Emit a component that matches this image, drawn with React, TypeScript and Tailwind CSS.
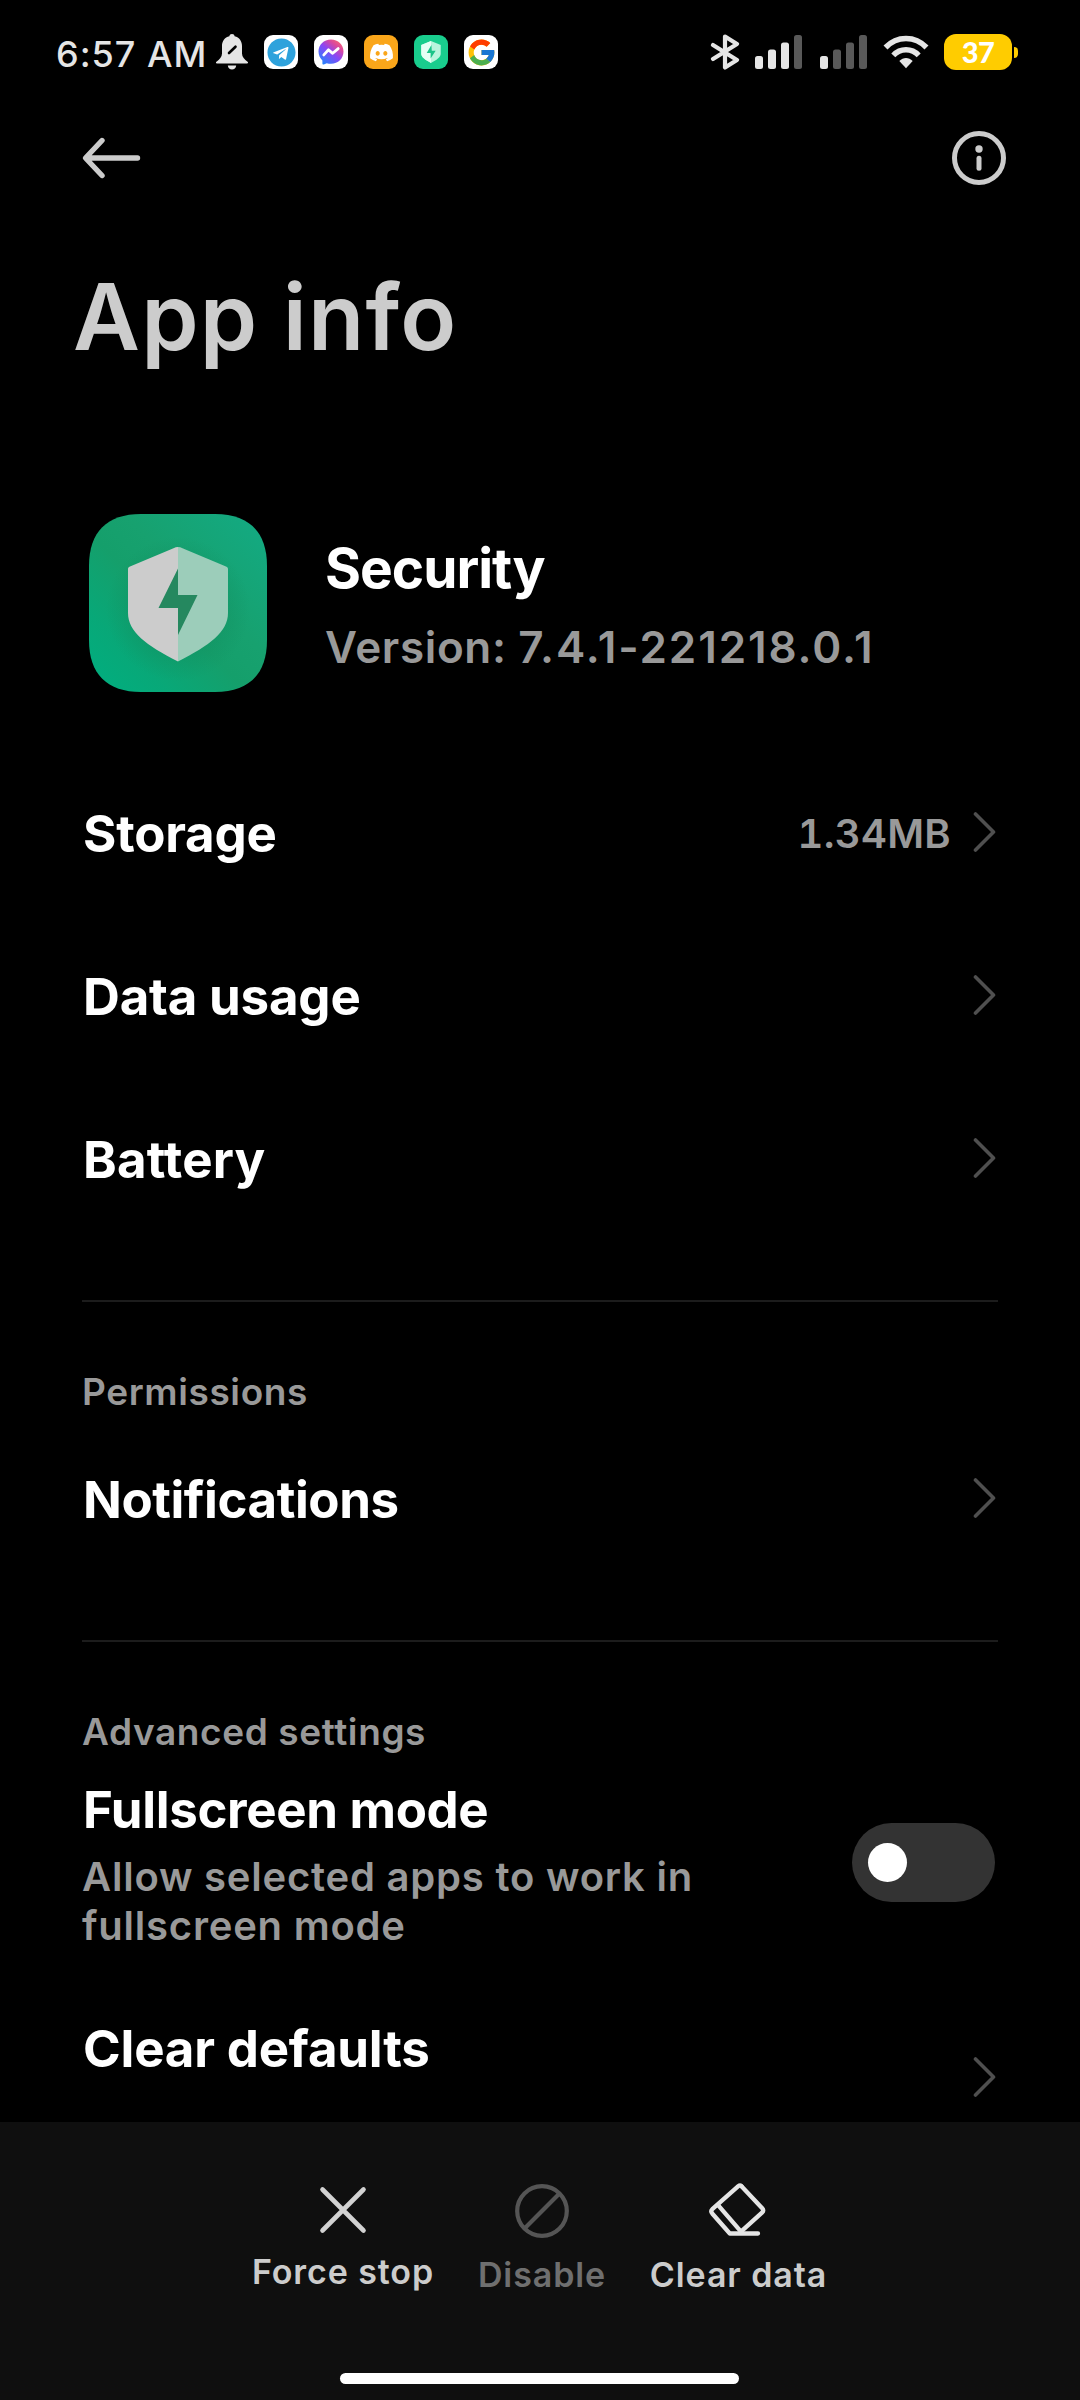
import type { ReactNode } from "react";
import { FaDiscord, FaTelegram } from "react-icons/fa";
import { FcGoogle } from "react-icons/fc";

const SHIELD = "M50 0 L100 20 V66 C100 84 78 98 50 113 C22 98 0 84 0 66 V20 Z";

function BellOffIcon() {
  return (
    <svg width="34" height="38" viewBox="0 0 34 38" fill="#e5e5e5">
      <path d="M17 1c-1.500 0-2.400.9-2.600 2.200C9.600 4.300 7 8.200 7 13v7.500c0 3.500-2.500 6-5.600 8.300-.8.700-.5 1.800.6 1.800h30c1.100 0 1.400-1.100.6-1.800C29.500 26.500 27 24 27 20.500V13c0-4.800-2.600-8.700-7.400-9.800C19.400 1.900 18.500 1 17 1Z" />
      <path d="M12.800 32.600h8.400c-.3 2.400-2 4-4.200 4s-3.900-1.600-4.200-4Z" />
      <path d="M14 20l6.500-6.300" stroke="#000" strokeWidth="2.600" strokeLinecap="round" />
    </svg>
  );
}

function MessengerIcon() {
  return (
    <svg width="26" height="26" viewBox="0 0 26 26">
      <defs>
        <linearGradient id="messenger" x1="0.1" y1="1" x2="0.9" y2="0">
          <stop offset="0" stopColor="#1a8cff" />
          <stop offset="0.5" stopColor="#8a46f5" />
          <stop offset="0.75" stopColor="#d9479f" />
          <stop offset="1" stopColor="#ff6c66" />
        </linearGradient>
      </defs>
      <path
        fill="url(#messenger)"
        d="M13 .5C5.800.5.500 5.700.500 12.600c0 3.600 1.500 6.600 3.900 8.800v3.200c0 .8.700 1.200 1.400.9l3-1.300c1.300.4 2.700.6 4.200.6 7.200 0 12.500-5.200 12.500-12.200S20.200.5 13 .5Z"
      />
      <path d="M5.800 15.900l4.700-5.100 4.200 3.500 5.500-4.700" fill="none" stroke="#fff" strokeWidth="2.800" strokeLinecap="round" strokeLinejoin="round" />
    </svg>
  );
}

function MiniShieldIcon() {
  return (
    <svg width="20" height="22" viewBox="0 0 100 113">
      <path d={SHIELD} fill="#b9f5dd" />
      <path d="M50 0 L0 20 V66 C0 84 22 98 50 113 Z" fill="#e6fff5" />
      <path d="M52 20 L28 62 H48 V90 L74 50 H54 Z" fill="#1bc488" />
    </svg>
  );
}

function BluetoothIcon() {
  return (
    <svg width="30" height="36" viewBox="0 0 30 36" fill="none" stroke="#e5e5e5" strokeWidth="4.200" strokeLinecap="round" strokeLinejoin="round">
      <path d="M3 11 L27 26 L15 33.500 V2.500 L27 10 L3 25" />
    </svg>
  );
}

const BAR_HEIGHTS = [13, 19.5, 26.5, 34];

function SignalIcon({ level }: { level: number }) {
  return (
    <svg width="47" height="34" viewBox="0 0 47 34">
      {BAR_HEIGHTS.map((h, i) => (
        <rect key={h} x={i * 13} y={34 - h} width="8" height={h} rx="2.500" fill={i < level ? "#e5e5e5" : "#595959"} />
      ))}
    </svg>
  );
}

function WifiIcon() {
  return (
    <svg width="46" height="34" viewBox="0 0 46 34">
      <g fill="none" stroke="#e5e5e5" strokeWidth="5.500">
        <path d="M2.500 12.500 C14 .5 32 .5 43.500 12.500" />
        <path d="M10.300 20.300 C17.300 12.900 28.700 12.900 35.700 20.300" />
      </g>
      <path d="M16.300 26 C20.300 22 25.700 22 29.700 26 L23 33.300 Z" fill="#e5e5e5" />
    </svg>
  );
}

function BatteryIcon() {
  return (
    <div className="flex items-center gap-[2px]">
      <div className="flex h-9 w-[68px] items-center justify-center rounded-[12px] bg-[#ffcc00] pb-px font-['Lato','Inter',sans-serif] text-[29px] font-black leading-none tracking-[-0.500px] text-white">
        37
      </div>
      <div className="h-[11px] w-[4px] rounded-r-full bg-[#ffcc00]" />
    </div>
  );
}

function AppBadge({ className, children }: { className: string; children: ReactNode }) {
  return (
    <div className={`flex size-[34px] items-center justify-center overflow-hidden rounded-[9px] ${className}`}>
      {children}
    </div>
  );
}

function StatusBar() {
  return (
    <div className="flex h-[104px] items-center justify-between pl-[56px] pr-[62px]">
      <div className="flex items-center">
        <span className="w-[159px] whitespace-nowrap pt-[3px] text-[36px] font-medium tracking-[1px] text-[#e5e5e5]">6:57 AM</span>
        <BellOffIcon />
        <div className="ml-[15px] flex gap-4">
          <AppBadge className="bg-white">
            <FaTelegram size={29} color="#2ea2dc" />
          </AppBadge>
          <AppBadge className="bg-white">
            <MessengerIcon />
          </AppBadge>
          <AppBadge className="bg-[#faa61a]">
            <FaDiscord size={25} color="#fff" />
          </AppBadge>
          <AppBadge className="bg-[#19cd8d]">
            <MiniShieldIcon />
          </AppBadge>
          <AppBadge className="bg-white">
            <FcGoogle size={31} />
          </AppBadge>
        </div>
      </div>
      <div className="flex items-center">
        <BluetoothIcon />
        <div className="ml-[15px] flex gap-[18px]">
          <SignalIcon level={3} />
          <SignalIcon level={1} />
        </div>
        <div className="ml-[16px] mr-[15px]">
          <WifiIcon />
        </div>
        <BatteryIcon />
      </div>
    </div>
  );
}

function BackIcon() {
  return (
    <svg width="60" height="44" viewBox="0 0 60 44" fill="none" stroke="#cccccc" strokeWidth="5.400" strokeLinecap="round" strokeLinejoin="round">
      <path d="M56.500 22 H6 M21 4.500 L4.500 22 L21 39.500" />
    </svg>
  );
}

function InfoIcon() {
  return (
    <svg width="54" height="54" viewBox="0 0 54 54">
      <circle cx="27" cy="27" r="24.500" fill="none" stroke="#cccccc" strokeWidth="5" />
      <circle cx="27" cy="18" r="3.700" fill="#cccccc" />
      <path d="M27 27.300 V37.300" stroke="#cccccc" strokeWidth="5" strokeLinecap="round" />
    </svg>
  );
}

function SecurityIcon() {
  return (
    <svg width="178" height="178" viewBox="0 0 178 178">
      <defs>
        <linearGradient id="tile" x1="0" y1="1" x2="1" y2="0">
          <stop offset="0" stopColor="#00af80" />
          <stop offset="0.22" stopColor="#08a878" />
          <stop offset="0.45" stopColor="#159f6b" />
          <stop offset="0.6" stopColor="#17a16f" />
          <stop offset="1" stopColor="#13ab84" />
        </linearGradient>
        <radialGradient id="tile-shade">
          <stop offset="0.5" stopColor="#108a5c" stopOpacity="0.45" />
          <stop offset="1" stopColor="#108a5c" stopOpacity="0" />
        </radialGradient>
      </defs>
      <path
        fill="url(#tile)"
        d="M52 0 H126 C160 0 178 18 178 52 V126 C178 160 160 178 126 178 H52 C18 178 0 160 0 126 V52 C0 18 18 0 52 0 Z"
      />
      <circle cx="89" cy="95" r="72" fill="url(#tile-shade)" />
      <path
        fill="#cccccc"
        d="M89 33 C87.500 33 86 33.500 84.500 34.200 L41 52.500 C39.600 53.100 39 53.800 39 55 V99 C39 118 57 131 89 147.500 Z"
      />
      <path
        fill="#9ccdba"
        d="M89 33 C90.500 33 92 33.500 93.500 34.200 L137 52.500 C138.400 53.100 139 53.800 139 55 V99 C139 118 121 131 89 147.500 Z"
      />
      <path fill="#25885f" d="M89 54.500 L69.500 94 H89 V121 L108.500 81 H89 Z" />
    </svg>
  );
}

function Chevron() {
  return (
    <svg width="24" height="42" viewBox="0 0 24 42" fill="none" stroke="#4f4f4f" strokeWidth="3.600" strokeLinecap="round" strokeLinejoin="round">
      <path d="M3.500 3 L21.500 21 L3.500 39" />
    </svg>
  );
}

interface SettingRowProps {
  label: string;
  value?: string;
  labelClass: string;
}

function SettingRow({ label, value, labelClass }: SettingRowProps) {
  return (
    <div className="flex h-[163px] items-center justify-between pl-px pr-[2px]">
      <span className={`pt-[2px] text-[51px] font-bold text-white ${labelClass}`}>{label}</span>
      <div className="flex items-center gap-[21px] pb-1">
        {value && <span className="pt-1 text-[40px] font-semibold tabular-nums tracking-[0.300px] text-[#999999]">{value}</span>}
        <Chevron />
      </div>
    </div>
  );
}

function SectionTitle({ children }: { children: string }) {
  return (
    <div className="mt-[59px] border-t-2 border-[#1c1c1c] pt-[63px]">
      <h2 className="h-[53px] text-[37px] font-semibold leading-[53px] tracking-[0.600px] text-[#999999]">{children}</h2>
    </div>
  );
}

function ForceStopIcon() {
  return (
    <svg width="50" height="50" viewBox="0 0 50 50" stroke="#d2d2d2" strokeWidth="4.600" strokeLinecap="round">
      <path d="M4.500 4.500 L45.500 45.500 M45.500 4.500 L4.500 45.500" />
    </svg>
  );
}

function DisableIcon() {
  return (
    <svg width="54" height="54" viewBox="0 0 54 54" fill="none" stroke="#555555" strokeWidth="4.200">
      <circle cx="27" cy="27" r="24.800" />
      <path d="M9.800 44.200 L44.200 9.800" />
    </svg>
  );
}

function EraserIcon() {
  return (
    <svg width="60" height="60" viewBox="0 1 60 60" fill="none" stroke="#e5e5e5" strokeWidth="4.300" strokeLinecap="round" strokeLinejoin="round">
      <path d="M33.500 6.200 L54.200 28.200 Q56.200 30.500 54 32.700 L33 51.700 L10.500 25.700" />
      <path d="M33.500 6.200 Q32 4.700 30.300 6.200 L4.300 29.200 Q2.300 31.200 4.200 33.500 L21.800 53.500 H50" />
    </svg>
  );
}

interface ActionProps {
  icon: ReactNode;
  label: string;
  className: string;
}

function Action({ icon, label, className }: ActionProps) {
  return (
    <button className={`flex flex-col items-center whitespace-nowrap text-[34px] font-semibold leading-[40px] tracking-[0.900px] ${className}`}>
      {icon}
      <span className="pl-px">{label}</span>
    </button>
  );
}

export default function App() {
  return (
    <div className="flex h-[2400px] w-[1080px] flex-col overflow-hidden bg-black font-['Inter',sans-serif]">
      <main className="h-[2122px] overflow-hidden">
        <StatusBar />
        <header className="flex h-[108px] items-center justify-between pl-[81px] pr-[74px]">
          <BackIcon />
          <InfoIcon />
        </header>
        <h1 className="mt-[50px] h-[109px] pl-[73px] text-[92px] font-semibold leading-[109px] tracking-[1.200px] text-[#cccccc]">
          App info
        </h1>

        <div className="px-[82px]">
          <div className="mt-[143px] flex h-[178px] pl-[7px]">
            <SecurityIcon />
            <div className="ml-[58px] pt-[15px]">
              <p className="text-[55px] font-bold leading-[79px] tracking-[-1px] text-white">Security</p>
              <p className="text-[44px] font-semibold leading-[79px] tracking-[0.650px] text-[#999999]">
                Version: <span className="tracking-[1.900px]">7.4.1-221218.0.1</span>
              </p>
            </div>
          </div>

          <div className="mt-[60px]">
            <SettingRow label="Storage" value="1.34MB" labelClass="tracking-[-0.200px]" />
            <SettingRow label="Data usage" labelClass="tracking-[-0.200px]" />
            <SettingRow label="Battery" labelClass="tracking-[0.200px]" />
          </div>

          <SectionTitle>Permissions</SectionTitle>
          <SettingRow label="Notifications" labelClass="tracking-[-0.450px]" />

          <SectionTitle>Advanced settings</SectionTitle>
          <div className="flex h-[209px] items-center justify-between">
            <div className="h-full pt-[22px]">
              <p className="pl-px text-[51px] font-bold leading-[60px] tracking-[-0.350px] text-white">Fullscreen mode</p>
              <p className="mt-[12px] w-[620px] text-[40px] font-semibold leading-[49px] tracking-[0.780px] text-[#999999]">
                Allow selected apps to work in fullscreen mode
              </p>
            </div>
            <div className="mr-[3px] flex h-[79px] w-[143px] items-center rounded-full bg-[#333333] pl-[16px]">
              <div className="size-[39px] rounded-full bg-white" />
            </div>
          </div>
          <div className="flex h-[219px] items-center justify-between pr-[2px]">
            <p className="self-start pl-px pt-[52px] text-[51px] font-bold leading-[60px] tracking-[-0.200px] text-white">Clear defaults</p>
            <Chevron />
          </div>
        </div>
      </main>

      <footer className="flex h-[278px] flex-col items-center justify-between bg-[#0f0f0f] pb-4 pr-[2px] pt-[60px]">
        <div className="flex gap-[47px]">
          <Action
            className="w-[180px] text-[#cccccc]"
            label="Force stop"
            icon={<span className="mb-[14px] flex h-[56px] items-center"><ForceStopIcon /></span>}
          />
          <Action
            className="w-[124px] text-[#6f6f6f]"
            label="Disable"
            icon={<span className="mb-[15px] flex h-[58px] items-center"><DisableIcon /></span>}
          />
          <Action
            className="w-[175px] text-[#cccccc]"
            label="Clear data"
            icon={<span className="mb-[15px] flex h-[58px] items-center"><EraserIcon /></span>}
          />
        </div>
        <div className="h-[11px] w-[399px] rounded-full bg-white" />
      </footer>
    </div>
  );
}
